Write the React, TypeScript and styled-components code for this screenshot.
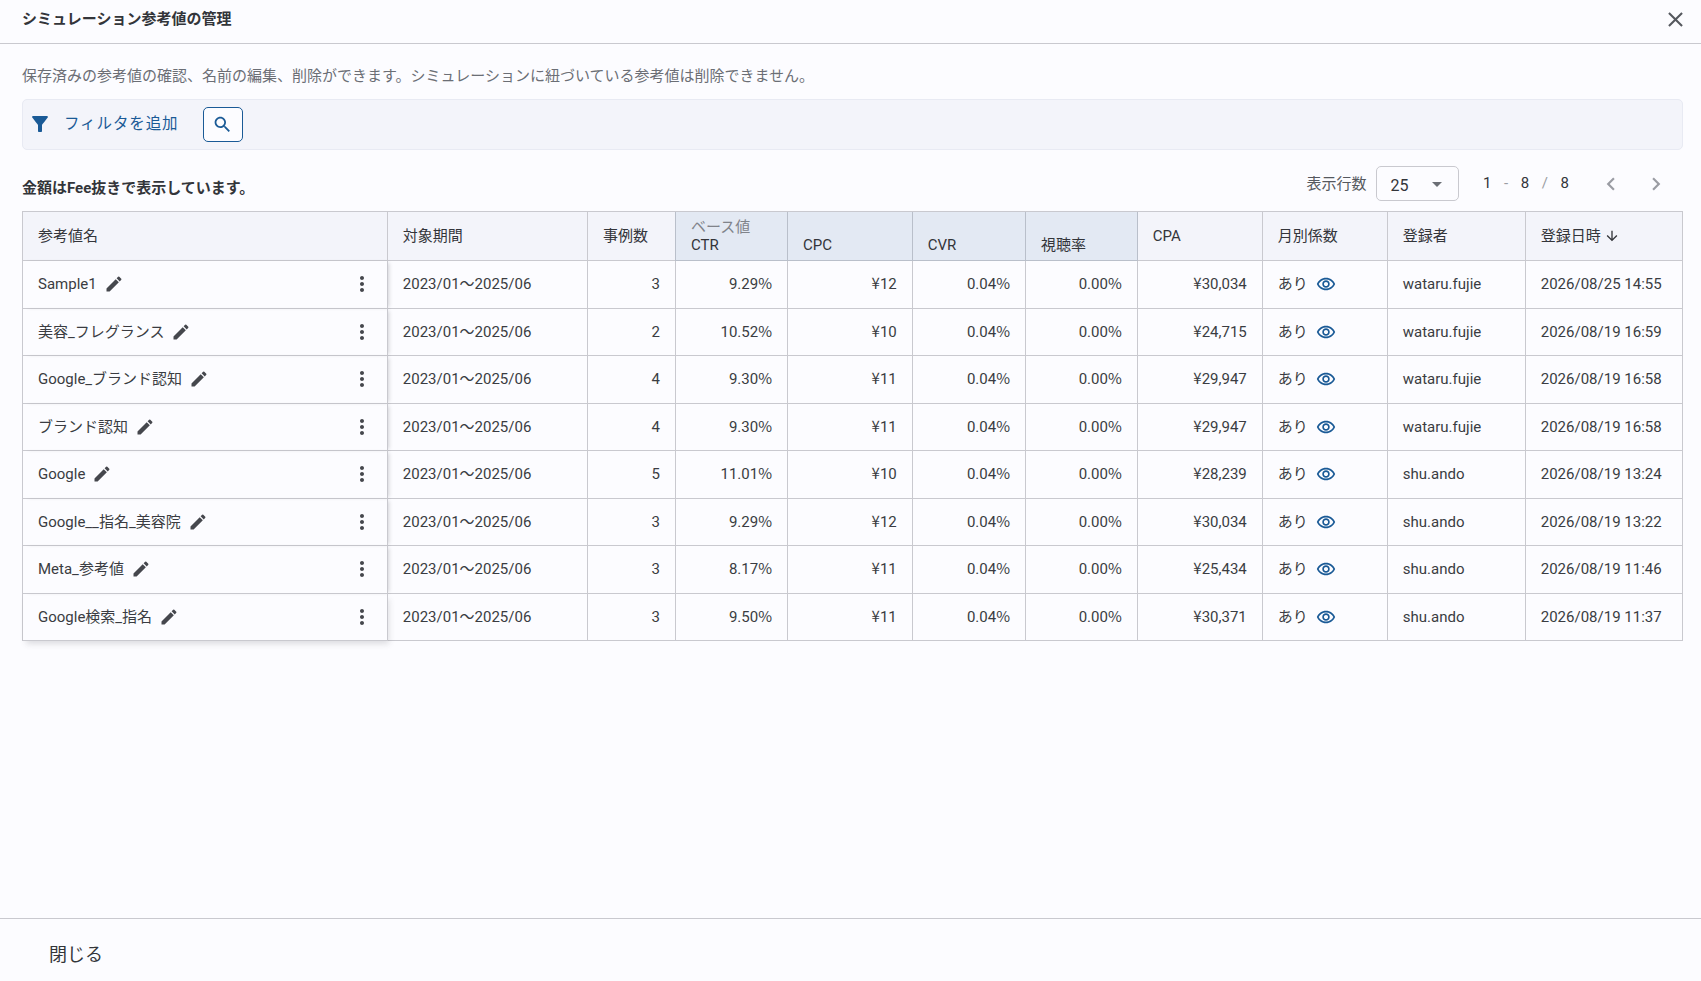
import * as React from 'react';
import styled, { createGlobalStyle } from 'styled-components';

const FONT = `Roboto, "Noto Sans CJK JP", sans-serif`;

const GlobalStyle = createGlobalStyle`
	html, body {
		margin: 0;
		padding: 0;
		background: #fcfcff;
	}
	body {
		font-family: ${FONT};
		color: #33353a;
	}
`;

interface Row {
	name: string;
	cases: number;
	ctr: string;
	cpc: string;
	cpa: string;
	user: string;
	date: string;
}

const rows: Row[] = [
	{ name: 'Sample1', cases: 3, ctr: '9.29', cpc: '12', cpa: '30,034', user: 'wataru.fujie', date: '2026/08/25 14:55' },
	{ name: '美容_フレグランス', cases: 2, ctr: '10.52', cpc: '10', cpa: '24,715', user: 'wataru.fujie', date: '2026/08/19 16:59' },
	{ name: 'Google_ブランド認知', cases: 4, ctr: '9.30', cpc: '11', cpa: '29,947', user: 'wataru.fujie', date: '2026/08/19 16:58' },
	{ name: 'ブランド認知', cases: 4, ctr: '9.30', cpc: '11', cpa: '29,947', user: 'wataru.fujie', date: '2026/08/19 16:58' },
	{ name: 'Google', cases: 5, ctr: '11.01', cpc: '10', cpa: '28,239', user: 'shu.ando', date: '2026/08/19 13:24' },
	{ name: 'Google__指名_美容院', cases: 3, ctr: '9.29', cpc: '12', cpa: '30,034', user: 'shu.ando', date: '2026/08/19 13:22' },
	{ name: 'Meta_参考値', cases: 3, ctr: '8.17', cpc: '11', cpa: '25,434', user: 'shu.ando', date: '2026/08/19 11:46' },
	{ name: 'Google検索_指名', cases: 3, ctr: '9.50', cpc: '11', cpa: '30,371', user: 'shu.ando', date: '2026/08/19 11:37' },
];

const columnWidths = [365.3, 200.2, 87.9, 112.1, 124.8, 113.2, 111.8, 125, 125, 138, 157];

const Icon = ({ d, size = 24, color = 'currentColor' }: { d: string; size?: number; color?: string }) => (
	<svg width={size} height={size} viewBox="0 0 24 24" fill={color} aria-hidden="true">
		<path d={d} />
	</svg>
);

const paths = {
	close: 'M19 6.41L17.59 5 12 10.59 6.41 5 5 6.41 10.59 12 5 17.59 6.41 19 12 13.41 17.59 19 19 17.59 13.41 12z',
	filter: 'M4.25 5.61C6.27 8.2 10 13 10 13v6c0 .55.45 1 1 1h2c.55 0 1-.45 1-1v-6s3.72-4.8 5.74-7.39c.51-.66.04-1.61-.79-1.61H5.04c-.83 0-1.3.95-.79 1.61z',
	search: 'M15.5 14h-.79l-.28-.27C15.41 12.59 16 11.11 16 9.5 16 5.91 13.09 3 9.5 3S3 5.91 3 9.5 5.91 16 9.5 16c1.61 0 3.09-.59 4.23-1.57l.27.28v.79l5 4.99L20.49 19l-4.99-5zm-6 0C7.01 14 5 11.99 5 9.5S7.01 5 9.5 5 14 7.01 14 9.5 11.99 14 9.5 14z',
	edit: 'M3 17.25V21h3.75L17.81 9.94l-3.75-3.75L3 17.25zM20.71 7.04c.39-.39.39-1.02 0-1.41l-2.34-2.34a.9959.9959 0 0 0-1.41 0l-1.83 1.83 3.75 3.75 1.83-1.83z',
	more: 'M12 8c1.1 0 2-.9 2-2s-.9-2-2-2-2 .9-2 2 .9 2 2 2zm0 2c-1.1 0-2 .9-2 2s.9 2 2 2 2-.9 2-2-.9-2-2-2zm0 6c-1.1 0-2 .9-2 2s.9 2 2 2 2-.9 2-2-.9-2-2-2z',
	eye: 'M12 6.5c3.79 0 7.17 2.13 8.82 5.5-1.65 3.37-5.02 5.5-8.82 5.5S4.83 15.37 3.18 12C4.83 8.63 8.21 6.5 12 6.5m0-2C7 4.5 2.73 7.61 1 12c1.73 4.39 6 7.5 11 7.5s9.27-3.11 11-7.5c-1.73-4.39-6-7.5-11-7.5zm0 5c1.38 0 2.5 1.12 2.5 2.5s-1.12 2.5-2.5 2.5-2.5-1.12-2.5-2.5 1.12-2.5 2.5-2.5m0-2c-2.48 0-4.5 2.02-4.5 4.5s2.02 4.5 4.5 4.5 4.5-2.02 4.5-4.5-2.02-4.5-4.5-4.5z',
	left: 'M15.41 7.41L14 6l-6 6 6 6 1.41-1.41L10.83 12z',
	right: 'M10 6L8.59 7.41 13.17 12l-4.58 4.59L10 18l6-6z',
	down: 'M20 12l-1.41-1.41L13 16.17V4h-2v12.17l-5.58-5.59L4 12l8 8 8-8z',
	drop: 'M7 10l5 5 5-5z',
};

export default function App() {
	return (
		<Dialog>
			<GlobalStyle />
			<Header>
				<Title>シミュレーション参考値の管理</Title>
				<CloseButton type="button" aria-label="close">
					<Icon d={paths.close} size={25} />
				</CloseButton>
			</Header>

			<Content>
				<Description>
					保存済みの参考値の確認、名前の編集、削除ができます。シミュレーションに紐づいている参考値は削除できません。
				</Description>

				<FilterBar>
					<FilterIcon>
						<Icon d={paths.filter} size={24} />
					</FilterIcon>
					<FilterLabel>フィルタを追加</FilterLabel>
					<SearchButton type="button" aria-label="search">
						<Icon d={paths.search} size={21} />
					</SearchButton>
				</FilterBar>

				<Toolbar>
					<Note>金額はFee抜きで表示しています。</Note>
					<Pager>
						<PagerLabel>表示行数</PagerLabel>
						<Select>
							<SelectValue>25</SelectValue>
							<Icon d={paths.drop} size={24} color="#6b6e75" />
						</Select>
						<PageNumbers>
							<span>1</span>
							<Dim>-</Dim>
							<span>8</span>
							<Dim>/</Dim>
							<span>8</span>
						</PageNumbers>
						<PageArrow>
							<Icon d={paths.left} size={26} />
						</PageArrow>
						<PageArrow>
							<Icon d={paths.right} size={26} />
						</PageArrow>
					</Pager>
				</Toolbar>

				<Table>
					<colgroup>
						{columnWidths.map((w, i) => (
							<col key={i} style={{ width: w }} />
						))}
					</colgroup>
					<thead>
						<tr>
							<Th>参考値名</Th>
							<Th>対象期間</Th>
							<Th>事例数</Th>
							<BaseTh>
								<GroupLabel>ベース値</GroupLabel>
								CTR
							</BaseTh>
							<BaseTh>CPC</BaseTh>
							<BaseTh>CVR</BaseTh>
							<BaseTh>視聴率</BaseTh>
							<Th>CPA</Th>
							<Th>月別係数</Th>
							<Th>登録者</Th>
							<Th>
								<SortLabel>
									登録日時
									<Icon d={paths.down} size={16} />
								</SortLabel>
							</Th>
						</tr>
					</thead>
					<tbody>
						{rows.map((row) => (
							<tr key={row.name}>
								<NameCell>
									<NameInner>
										<NameText>
											{row.name}
											<EditIcon>
												<Icon d={paths.edit} size={20} />
											</EditIcon>
										</NameText>
										<MoreIcon>
											<Icon d={paths.more} size={24} />
										</MoreIcon>
									</NameInner>
								</NameCell>
								<Td>2023/01〜2025/06</Td>
								<NumTd>{row.cases}</NumTd>
								<NumTd>{row.ctr}<Unit>%</Unit></NumTd>
								<NumTd><Unit>¥</Unit>{row.cpc}</NumTd>
								<NumTd>0.04<Unit>%</Unit></NumTd>
								<NumTd>0.00<Unit>%</Unit></NumTd>
								<NumTd><Unit>¥</Unit>{row.cpa}</NumTd>
								<Td>
									<Monthly>
										あり
										<Icon d={paths.eye} size={20} color="#1a5a96" />
									</Monthly>
								</Td>
								<Td>{row.user}</Td>
								<Td>{row.date}</Td>
							</tr>
						))}
					</tbody>
				</Table>
			</Content>

			<Footer>
				<CloseText type="button">閉じる</CloseText>
			</Footer>
		</Dialog>
	);
}

const Dialog = styled.div`
	display: flex;
	flex-direction: column;
	height: 981px;
	background: #fcfcff;
	overflow: hidden;
`;

const Header = styled.header`
	flex: none;
	display: flex;
	align-items: center;
	justify-content: space-between;
	height: 43px;
	padding: 0 13px 0 22px;
	border-bottom: 1px solid #c9c9cf;
`;

const Title = styled.h1`
	margin: -8px 0 0;
	font-size: 15px;
	font-weight: 700;
	color: #33353a;
`;

const CloseButton = styled.button`
	display: flex;
	margin: -4px 0 0;
	padding: 0;
	border: 0;
	background: none;
	color: #55585e;
`;

const Content = styled.main`
	flex: 1;
	padding: 0 18px 0 22px;
`;

const Description = styled.p`
	margin: 0;
	padding-top: 21px;
	font-size: 15px;
	line-height: 22px;
	color: #6b6e75;
`;

const FilterBar = styled.div`
	display: flex;
	align-items: center;
	height: 49px;
	margin-top: 12px;
	padding-left: 5px;
	background: #f3f4fa;
	border: 1px solid #e8eaf3;
	border-radius: 5px;
	color: #1a5a96;
`;

const FilterIcon = styled.span`
	display: flex;
	margin-bottom: 2px;
`;

const FilterLabel = styled.span`
	margin: 0 0 5px 12px;
	font-size: 15.5px;
	letter-spacing: 0.9px;
`;

const SearchButton = styled.button`
	display: flex;
	align-items: center;
	justify-content: center;
	box-sizing: border-box;
	width: 40px;
	height: 35px;
	margin-left: 24px;
	padding: 0;
	background: #fcfcff;
	border: 1px solid #1a5a96;
	border-radius: 5px;
	color: #1a5a96;
`;

const Toolbar = styled.div`
	display: flex;
	align-items: flex-end;
	justify-content: space-between;
	height: 51px;
	padding-bottom: 10px;
`;

const Note = styled.p`
	margin: 0 0 2px;
	font-size: 15px;
	font-weight: 700;
	line-height: 22px;
`;

const Pager = styled.div`
	display: flex;
	align-items: center;
	margin-right: 14.5px;
`;

const PagerLabel = styled.span`
	font-size: 15px;
	color: #55585e;
	margin-top: -2px;
`;

const Select = styled.div`
	display: flex;
	align-items: center;
	justify-content: space-between;
	box-sizing: border-box;
	width: 83px;
	height: 35px;
	margin-left: 9px;
	padding: 0 9px 0 14px;
	background: #fcfcff;
	border: 1px solid #c9c9cf;
	border-radius: 5px;
	font-size: 16px;
	color: #33353a;
`;

const SelectValue = styled.span`
	margin-top: 3px;
`;

const PageNumbers = styled.div`
	display: flex;
	align-items: center;
	justify-content: space-between;
	width: 86px;
	margin: -2px 9.5px 0 24.5px;
	font-size: 15px;
`;

const Dim = styled.span`
	color: #9a9ca3;
`;

const PageArrow = styled.span`
	display: flex;
	margin-left: 19px;
	color: #9a9ca3;
`;

const Table = styled.table`
	width: 1661px;
	table-layout: fixed;
	border-collapse: separate;
	border-spacing: 0;
	font-size: 15px;
	line-height: 20px;
	border-top: 1px solid #c9c9cf;
	border-left: 1px solid #c9c9cf;
`;

const Th = styled.th`
	box-sizing: border-box;
	height: 49px;
	padding: 0 15.5px 1px 14.5px;
	background: #f3f4fa;
	border-right: 1px solid #c9c9cf;
	border-bottom: 1px solid #c9c9cf;
	font-weight: 400;
	text-align: left;
	vertical-align: middle;
	color: #33353a;
	white-space: nowrap;

	&:first-child {
		padding-left: 15px;
	}
`;

const BaseTh = styled(Th)`
	background: #e3e9f3;
	border-color: #b9bfca;
	box-shadow: -1px 0 0 #b9bfca;
	vertical-align: bottom;
	padding-bottom: 6px;
	line-height: 18px;
`;

const GroupLabel = styled.div`
	color: #80838a;
`;

const SortLabel = styled.span`
	display: inline-flex;
	align-items: center;
	gap: 3px;
`;

const Td = styled.td`
	box-sizing: border-box;
	height: 47.5px;
	padding: 0 15.5px 0 14.5px;
	border-right: 1px solid #c9c9cf;
	border-bottom: 1px solid #c9c9cf;
	white-space: nowrap;
	color: #3a3c42;
`;

const NumTd = styled(Td)`
	text-align: right;
`;

const Unit = styled.span`
	font-family: "Noto Sans CJK JP", sans-serif;
	line-height: 0;
`;

const NameCell = styled(Td)`
	position: relative;
	z-index: 1;
	box-shadow: 3px 0 4px -2px rgba(60, 60, 70, 0.22);
	padding: 0 13px 0 15px;

	tr:last-child > & {
		box-shadow: 2px 4px 6px -1px rgba(60, 60, 70, 0.16);
	}
`;

const NameInner = styled.div`
	display: flex;
	align-items: center;
	justify-content: space-between;
`;

const NameText = styled.span`
	display: inline-flex;
	align-items: center;
`;

const EditIcon = styled.span`
	display: flex;
	margin-left: 7px;
	color: #45474d;
`;

const MoreIcon = styled.span`
	display: flex;
	color: #45474d;
`;

const Monthly = styled.span`
	display: inline-flex;
	align-items: center;
	gap: 8px;
`;

const Footer = styled.footer`
	flex: none;
	display: flex;
	align-items: center;
	box-sizing: border-box;
	height: 63px;
	padding: 6px 0 0 49px;
	border-top: 1px solid #c9c9cf;
`;

const CloseText = styled.button`
	padding: 0;
	border: 0;
	background: none;
	font-family: ${FONT};
	font-size: 18px;
	color: #33353a;
`;
